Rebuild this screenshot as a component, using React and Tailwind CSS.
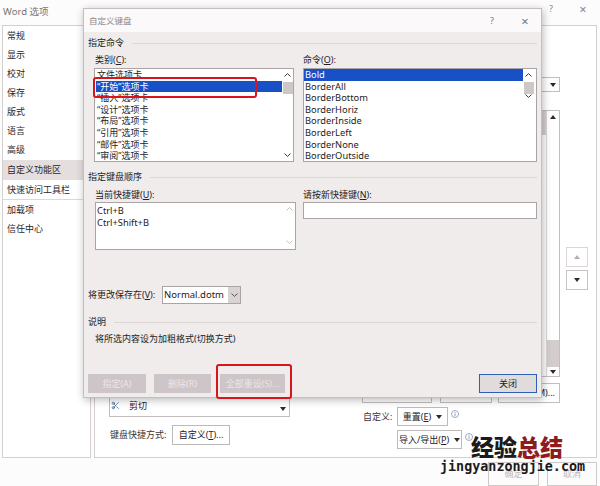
import React from 'react';
import { Scissors } from 'lucide-react';

const ChevUp = ({ color = '#3a3436' }) => (
  <svg width="7" height="4" viewBox="0 0 7 4">
    <path d="M0.5 3.5L3.5 0.6L6.5 3.5" fill="none" stroke={color} strokeWidth="1" />
  </svg>
);

const ChevDown = ({ color = '#3a3436' }) => (
  <svg width="7" height="4" viewBox="0 0 7 4">
    <path d="M0.5 0.5L3.5 3.4L6.5 0.5" fill="none" stroke={color} strokeWidth="1" />
  </svg>
);

const Caret = ({ up, color = '#2e2a2b' }) => (
  <svg width="6" height="4" viewBox="0 0 6 4">
    <path d={up ? 'M0 4H6L3 0Z' : 'M0 0H6L3 4Z'} fill={color} />
  </svg>
);

const Info = () => (
  <svg width="8" height="8" viewBox="0 0 8 8">
    <circle cx="4" cy="4" r="3.5" fill="none" stroke="#8793ad" strokeWidth="0.8" />
    <path d="M4 3.4V6.1" stroke="#8793ad" strokeWidth="0.9" />
    <circle cx="4" cy="2.2" r="0.55" fill="#8793ad" />
  </svg>
);

const Section = ({ title }) => (
  <div className="flex items-center h-[12px]">
    <span className="text-[9px] leading-[12px] text-[#231e20]">{title}</span>
    <div className="flex-1 h-px bg-[#dcd6d7] ml-[8px]" />
  </div>
);

const categories = ['文件选项卡', '“开始”选项卡', '“插入”选项卡', '“设计”选项卡', '“布局”选项卡', '“引用”选项卡', '“邮件”选项卡', '“审阅”选项卡'];
const commands = ['Bold', 'BorderAll', 'BorderBottom', 'BorderHoriz', 'BorderInside', 'BorderLeft', 'BorderNone', 'BorderOutside'];
const nav = ['常规', '显示', '校对', '保存', '版式', '语言', '高级'];

const ListScroll = () => (
  <div className="w-[11px] flex flex-col items-center pt-[4px] pb-[4px]">
    <ChevUp />
    <div className="mt-[5px] w-[10px] h-[12px] bg-[#cdc7c8]" />
    <div className="flex-1" />
    <ChevDown />
  </div>
);

const Dialog = () => (
  <div className="absolute left-[83px] top-[8px] w-[459px] h-[390px] flex flex-col border border-[#c4bebf] shadow-[1px_2px_8px_rgba(0,0,0,0.28)]">
    <div className="h-[23px] bg-[#fbf9f9] flex items-center">
      <span className="pl-[5px] text-[8.5px] leading-[12px] text-[#8d8788]">自定义键盘</span>
      <span className="ml-auto w-[20px] text-center text-[9px] leading-[12px] text-[#777]">?</span>
      <span className="ml-[13px] mr-[6px] w-[20px] text-center text-[13px] leading-[14px] text-[#777]">×</span>
    </div>
    <div className="flex-1 bg-[#f0ecec] pl-[4px] pr-[4px] pt-[5px] flex flex-col text-[9px] leading-[12px]">
      <Section title="指定命令" />
      <div className="mt-[5px] flex">
        <div className="ml-[6px] w-[200px] flex flex-col">
          <div className="h-[12px] pl-[1px]">类别(<u>C</u>):</div>
          <div className="mt-[2px] h-[94px] border border-[#aaa4a6] bg-white flex">
            <div className="flex-1 pl-[1px] overflow-hidden">
              {categories.map((c, i) => (
                <div key={c} className={`h-[11.6px] leading-[11.6px] pl-[1px] ${i === 1 ? 'bg-[#1850c6] text-white' : 'text-[#1e1a1c]'}`}>{c}</div>
              ))}
            </div>
            <ListScroll />
          </div>
        </div>
        <div className="ml-[9px] flex-1 flex flex-col">
          <div className="h-[12px]">命令(<u>O</u>):</div>
          <div className="mt-[2px] h-[94px] border border-[#aaa4a6] bg-white flex">
            <div className="flex-1 overflow-hidden">
              {commands.map((c, i) => (
                <div key={c} className={`h-[11.6px] leading-[11.6px] pl-[1px] text-[9.3px] ${i === 0 ? 'bg-[#1850c6] text-white' : 'text-[#1e1a1c]'}`}>{c}</div>
              ))}
            </div>
            <div className="w-[13px]">
              <ListScroll />
            </div>
          </div>
        </div>
      </div>

      <div className="mt-[9px]"><Section title="指定键盘顺序" /></div>
      <div className="mt-[6px] flex">
        <div className="ml-[7px] w-[201px] flex flex-col">
          <div className="h-[12px]">当前快捷键(<u>U</u>):</div>
          <div className="mt-[1px] h-[48px] border border-[#aaa4a6] bg-white flex">
            <div className="flex-1 pt-[2px] pl-[1px] text-[9.3px] leading-[11.7px]">
              <div>Ctrl+B</div>
              <div>Ctrl+Shift+B</div>
            </div>
            <div className="w-[12px] flex flex-col items-center pt-[4px] pb-[5px] justify-between">
              <ChevUp color="#c2bdbe" />
              <ChevDown color="#c2bdbe" />
            </div>
          </div>
        </div>
        <div className="ml-[7px] flex-1 flex flex-col">
          <div className="h-[12px]">请按新快捷键(<u>N</u>):</div>
          <div className="mt-[1px] h-[17px] border border-[#aaa4a6] bg-white" />
        </div>
      </div>

      <div className="mt-[36px] h-[18px] flex items-center">
        <span className="w-[74px]">将更改保存在(<u>V</u>):</span>
        <div className="w-[79px] h-[18px] border border-[#aaa4a6] bg-white flex">
          <span className="flex-1 pl-[1px] text-[9.5px] leading-[16px]">Normal.dotm</span>
          <div className="w-[12px] bg-[#d9d3d4] flex items-center justify-center"><ChevDown color="#555" /></div>
        </div>
      </div>

      <div className="mt-[12px]"><Section title="说明" /></div>
      <div className="mt-[5px] pl-[7px] h-[12px] text-[#231e20]">将所选内容设为加粗格式(切换方式)</div>

      <div className="mt-[29px] h-[19px] flex text-[#ece6e7]">
        <div className="w-[58px] bg-[#cdc5c7] flex items-center justify-center">指定(A)</div>
        <div className="ml-[8px] w-[57px] bg-[#cdc5c7] flex items-center justify-center">删除(R)</div>
        <div className="ml-[9px] w-[65px] bg-[#cdc5c7] flex items-center justify-center">全部重设(S)...</div>
        <div className="ml-auto w-[58px] border-[1.5px] border-[#2e60b6] bg-[#e1dbdc] text-[#231e20] flex items-center justify-center">关闭</div>
      </div>
    </div>
  </div>
);

export default function App() {
  return (
    <div className="relative w-[600px] h-[486px] overflow-hidden bg-[#fdfcfc] font-['Noto_Sans','Noto_Sans_CJK_SC',sans-serif] text-[#262022]">
      <div className="flex h-[25px] items-start">
        <span className="ml-[3px] mt-[5px] text-[9.5px] leading-[14px] text-[#7a7476]">Word 选项</span>
        <span className="ml-auto mt-[2px] w-[20px] text-center text-[9px] leading-[14px] text-[#8a8486]">?</span>
        <span className="ml-[12px] mr-[7px] w-[20px] text-center text-[13px] leading-[18px] text-[#8a8486]">×</span>
      </div>

      <div className="flex h-[433px] text-[9px] leading-[12px]">
        <div className="ml-[2px] w-[89px] h-full border border-[#d5cfd0] bg-white pr-[6px] text-[#2b2628]">
          {nav.map((n) => (
            <div key={n} className="h-[19px] leading-[19px] pl-[4px]">{n}</div>
          ))}
          <div className="mt-[1px] h-[20px] leading-[20px] pl-[4px] bg-[#e4dedf]">自定义功能区</div>
          <div className="h-[19px] leading-[19px] pl-[4px]">快速访问工具栏</div>
          <div className="h-px bg-[#ddd7d8]" />
          <div className="h-[19px] leading-[19px] pl-[4px]">加载项</div>
          <div className="h-[19px] leading-[19px] pl-[4px]">信任中心</div>
        </div>

        <div className="ml-[3px] w-[503px] h-full border border-[#d5cfd0] bg-white flex pl-[14px]">
          <div className="w-[181px] flex flex-col">
            <div className="mt-[69px] h-[322px] border border-[#c3bdbe] flex">
              <div className="flex-1 flex flex-col justify-end overflow-hidden">
                <div className="h-[17px] shrink-0 flex items-center">
                  <Scissors size={9} strokeWidth={1.6} className="ml-[1px] text-[#1f3f7a]" />
                  <span className="ml-[9px]">剪切</span>
                </div>
                <div className="h-[2px] shrink-0 overflow-hidden">
                  <div className="h-[17px] flex items-center">
                    <div className="ml-[1px] w-[9px] h-[9px] border border-[#666]" />
                  </div>
                </div>
              </div>
              <div className="w-[12px] flex flex-col justify-end items-center pb-[5px]">
                <Caret />
              </div>
            </div>
            <div className="mt-[8px] h-[20px] flex items-center">
              <span className="ml-[1px] w-[62px] text-[#3a3436]">键盘快捷方式:</span>
              <div className="w-[58px] h-[20px] border border-[#bfb9ba] bg-white flex items-center justify-center whitespace-nowrap">自定义(<u>T</u>)...</div>
            </div>
          </div>

          <div className="ml-[72px] w-[198px] flex flex-col">
            <div className="mt-[51px] h-[15px] border border-[#c3bdbe] flex items-center justify-end pr-[3px]">
              <Caret />
            </div>
            <div className="mt-[18px] h-[267px] border border-[#c3bdbe] flex">
              <div className="flex-1">
                <div className="h-[24px] bg-[#d6d0d1]" />
              </div>
              <div className="w-[13px] border-l border-[#ddd7d8] flex flex-col items-center">
                <div className="mt-[4px]"><Caret up /></div>
                <div className="flex-1" />
                <div className="w-full h-[27px] bg-[#d3cdce]" />
                <div className="h-[9px] flex items-center"><Caret /></div>
              </div>
            </div>
            <div className="mt-[6px] h-[20px] flex">
              <div className="w-[70px] border border-[#c3bdbe]" />
              <div className="ml-[8px] w-[52px] border border-[#c3bdbe]" />
              <div className="ml-[6px] w-[62px] border border-[#c3bdbe] flex items-center justify-end pr-[4px]">M)...</div>
            </div>
            <div className="mt-[4px] h-[19px] flex items-center">
              <span className="ml-[1px] w-[34px] text-[#3a3436]">自定义:</span>
              <div className="w-[51px] h-[19px] border border-[#bfb9ba] flex items-center justify-center gap-[5px]">
                <span>重置(<u>E</u>)</span><Caret />
              </div>
              <div className="ml-[3px] -mt-[6px]"><Info /></div>
            </div>
            <div className="mt-[4px] h-[19px] flex items-center">
              <div className="ml-[35px] w-[65px] h-[19px] border border-[#bfb9ba] flex items-center justify-center gap-[5px]">
                <span>导入/导出(<u>P</u>)</span><Caret />
              </div>
              <div className="ml-[3px] -mt-[6px]"><Info /></div>
            </div>
          </div>

          <div className="ml-[6px] w-[22px] flex flex-col">
            <div className="mt-[221px] h-[20px] border border-[#dcd6d7] flex items-center justify-center"><Caret up color="#b5afb0" /></div>
            <div className="mt-[3px] h-[20px] border border-[#c9c3c4] flex items-center justify-center"><Caret /></div>
          </div>
        </div>
      </div>

      <div className="flex pt-[4px] text-[9px] text-[#bdb7b8]">
        <div className="ml-[488px] w-[51px] h-[24px] border border-[#cfc9ca] flex items-center justify-center">确定</div>
        <div className="ml-[8px] w-[50px] h-[24px] border border-[#cfc9ca] flex items-center justify-center">取消</div>
      </div>

      <Dialog />

      <div className="absolute left-[93px] top-[77px] w-[164px] h-[21px] border-2 border-[#d8141c] rounded-[3px]" />
      <div className="absolute left-[216px] top-[364px] w-[76px] h-[35px] border-2 border-[#d8141c] rounded-[3px]" />

      <div className="absolute left-[471px] top-[432px] text-[23px] leading-[28px] font-black font-['Noto_Sans_CJK_SC',sans-serif]">
        <span className="text-[#1c1a1b]">经验</span><span className="text-[#8e1c1f]">总结</span>
      </div>
      <div className="absolute left-[440px] top-[459px] text-[13.4px] leading-[16px] font-bold text-[#1c1a1b] font-['DejaVu_Sans_Mono',monospace]">
        jingyanzongjie.com
      </div>
    </div>
  );
}
